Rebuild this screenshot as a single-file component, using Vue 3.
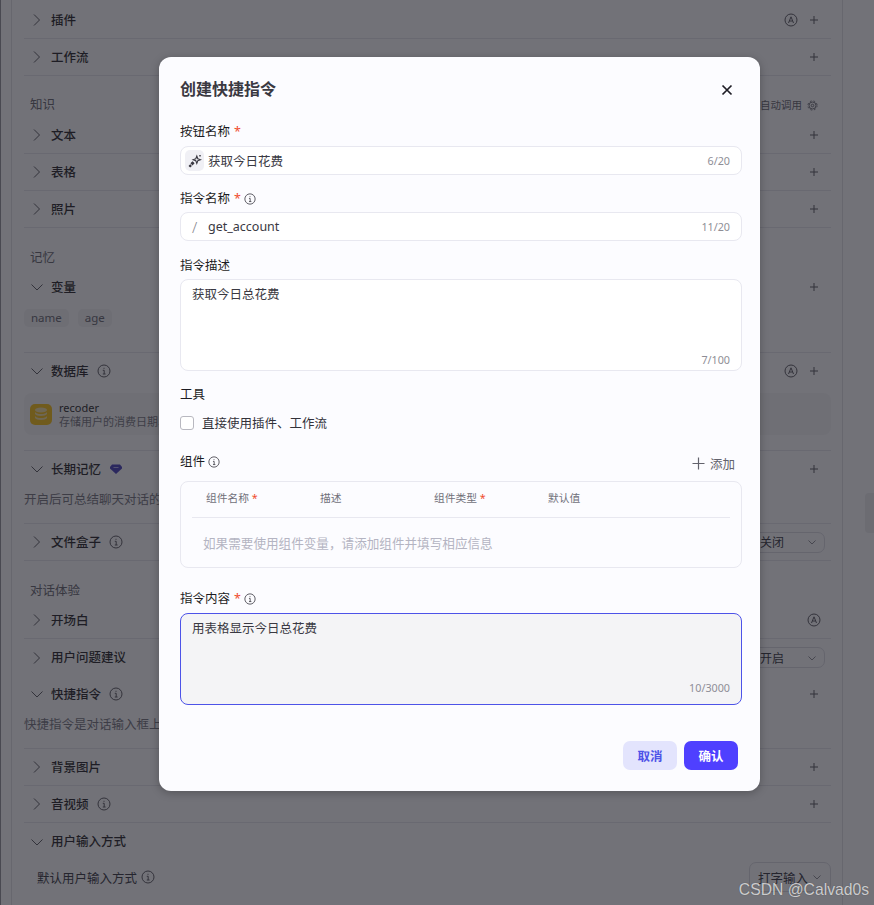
<template>
  <div class="page">
    <div class="shell">
      <div class="inner">
        <div class="panel">
          <template v-for="(block, i) in blocks" :key="i">
            <div v-if="block.type === 'heading'" class="group-title" :class="{ tall: block.tall }">
              <span>{{ block.text }}</span>
              <span v-if="block.auto" class="auto">自动调用
                <svg width="11" height="11" viewBox="0 0 12 12" fill="none" stroke="currentColor" stroke-width="1">
                  <circle cx="6" cy="6" r="3.800" />
                  <circle cx="6" cy="6" r="5" stroke-dasharray="2 2" />
                  <circle cx="6" cy="6" r="1.400" />
                </svg>
              </span>
            </div>
            <div v-else class="section" :class="{ lined: block.line !== false }">
              <div class="row">
                <svg class="chev" width="14" height="14" viewBox="0 0 14 14" fill="none" stroke="currentColor" stroke-width="1">
                  <path v-if="block.open" d="M1.500 4.500L7 10l5.500-5.500" />
                  <path v-else d="M4 1.500L9.500 7 4 12.500" />
                </svg>
                <span class="row-name">{{ block.text }}</span>
                <svg v-if="block.info" class="info" width="14" height="14" viewBox="0 0 14 14" fill="none" stroke="currentColor">
                  <circle cx="7" cy="7" r="6" />
                  <path d="M5.800 6.300H7.200V10M5.800 10h2.800M7 3.800v1" />
                </svg>
                <svg v-if="block.gem" class="gem" width="12" height="12" viewBox="0 0 12 12"><path d="M2 1.500h8l2 2.500v1.500L6 11 0 5.500V4z" fill="#3f37b8" /><path d="M3.500 4.500h5" stroke="#a9a5e6" /></svg>
                <span class="spacer"></span>
                <svg v-if="block.auto" class="badge" :class="{ last: !block.plus }" width="14" height="14" viewBox="0 0 14 14" fill="none" stroke="currentColor">
                  <circle cx="7" cy="7" r="6" />
                  <path d="M4.500 10L7 3.800 9.500 10M5.400 8h3.200" />
                </svg>
                <svg v-if="block.plus" class="plus" width="10" height="10" viewBox="0 0 10 10" stroke="currentColor"><path d="M5 1v8M1 5h8" /></svg>
                <div v-if="block.select" class="select">
                  <span>{{ block.select }}</span>
                  <svg width="10" height="10" viewBox="0 0 10 10" fill="none" stroke="currentColor"><path d="M1.500 3.500L5 7l3.500-3.500" /></svg>
                </div>
              </div>
              <div v-if="block.tags" class="tags">
                <span v-for="tag in block.tags" :key="tag" class="tag">{{ tag }}</span>
              </div>
              <div v-if="block.card" class="db-card">
                <div class="db-icon">
                  <svg width="14" height="14" viewBox="0 0 14 14" fill="#f0dca0">
                    <ellipse cx="7" cy="3" rx="6" ry="2.400" />
                    <path d="M1 5c1 1.400 3 2 6 2s5-.6 6-2v2c-.8 1.300-3 2-6 2S1.800 8.300 1 7zM1 9c1 1.400 3 2 6 2s5-.6 6-2v2c-.8 1.300-3 2-6 2s-5.200-.7-6-2z" />
                  </svg>
                </div>
                <div class="db-text">
                  <div class="db-name">recoder</div>
                  <div class="db-desc">存储用户的消费日期、消费金额等信息</div>
                </div>
              </div>
              <div v-if="block.desc" class="desc">{{ block.desc }}</div>
              <div v-if="block.sub" class="sub-row">
                <span>默认用户输入方式</span>
                <svg class="info" width="14" height="14" viewBox="0 0 14 14" fill="none" stroke="currentColor">
                  <circle cx="7" cy="7" r="6" />
                  <path d="M5.800 6.300H7.200V10M5.800 10h2.800M7 3.800v1" />
                </svg>
                <span class="spacer"></span>
                <div class="select wide">
                  <span>打字输入</span>
                  <svg width="10" height="10" viewBox="0 0 10 10" fill="none" stroke="currentColor"><path d="M1.500 3.500L5 7l3.500-3.500" /></svg>
                </div>
              </div>
            </div>
          </template>
        </div>
      </div>
    </div>
    <div class="scroll-thumb"></div>

    <div class="mask"></div>

    <div class="modal">
      <div class="modal-head">
        <h2>创建快捷指令</h2>
        <svg width="12" height="12" viewBox="0 0 12 12" stroke="#1f1e26" stroke-width="1.700"><path d="M1.500 1.500l9 9M10.500 1.500l-9 9" /></svg>
      </div>

      <div class="label">按钮名称 <i>*</i></div>
      <div class="input">
        <span class="wand">
          <svg width="14" height="14" viewBox="0 0 14 14" fill="none" stroke="#3a3942" stroke-width="1.100">
            <path d="M8.800 2l1 2.700 2.700 1-2.700 1-1 2.700-1-2.700-2.700-1 2.700-1z" />
            <path d="M4.500 8l1.300 1.300-1.300 1.300-1.300-1.300zM2.200 11l.9.900-.9.900-.9-.9z" fill="#3a3942" />
            <path d="M12 1v1.600M11.200 1.800h1.600" />
          </svg>
        </span>
        <span class="value name-value">获取今日花费</span>
        <span class="count">6/20</span>
      </div>

      <div class="label gap">指令名称 <i>*</i>
        <svg class="tip" width="12" height="12" viewBox="0 0 14 14" fill="none" stroke="currentColor" stroke-width="1.100"><circle cx="7" cy="7" r="6" /><path d="M5.800 6.300H7.200V10M5.800 10h2.800M7 3.800v1" /></svg>
      </div>
      <div class="input">
        <span class="slash">/</span>
        <span class="value">get_account</span>
        <span class="count">11/20</span>
      </div>

      <div class="label gap wide-gap">指令描述</div>
      <div class="textarea">
        <span class="value">获取今日总花费</span>
        <span class="count corner">7/100</span>
      </div>

      <div class="label tools">工具</div>
      <label class="check">
        <span class="box"></span>
        <span>直接使用插件、工作流</span>
      </label>

      <div class="comp-head">
        <div class="label">组件
          <svg class="tip" width="12" height="12" viewBox="0 0 14 14" fill="none" stroke="currentColor" stroke-width="1.100"><circle cx="7" cy="7" r="6" /><path d="M5.800 6.300H7.200V10M5.800 10h2.800M7 3.800v1" /></svg>
        </div>
        <div class="add">
          <svg width="13" height="13" viewBox="0 0 13 13" stroke="currentColor" stroke-width="1.200"><path d="M6.500 .5v12M.5 6.500h12" /></svg>
          添加
        </div>
      </div>
      <div class="comp-box">
        <div class="comp-cols">
          <span>组件名称 <i>*</i></span>
          <span>描述</span>
          <span>组件类型 <i>*</i></span>
          <span>默认值</span>
        </div>
        <div class="comp-empty">如果需要使用组件变量，请添加组件并填写相应信息</div>
      </div>

      <div class="label content-label">指令内容 <i>*</i>
        <svg class="tip" width="12" height="12" viewBox="0 0 14 14" fill="none" stroke="currentColor" stroke-width="1.100"><circle cx="7" cy="7" r="6" /><path d="M5.800 6.300H7.200V10M5.800 10h2.800M7 3.800v1" /></svg>
      </div>
      <div class="textarea focused">
        <span class="value">用表格显示今日总花费</span>
        <span class="count corner">10/3000</span>
      </div>

      <div class="actions">
        <button class="btn ghost">取消</button>
        <button class="btn primary">确认</button>
      </div>
    </div>

    <div class="watermark">CSDN @Calvad0s</div>
  </div>
</template>

<script setup>
const blocks = [
  { text: '插件', plus: true, auto: true },
  { text: '工作流', plus: true },
  { type: 'heading', text: '知识', auto: true },
  { text: '文本', plus: true },
  { text: '表格', plus: true },
  { text: '照片', plus: true },
  { type: 'heading', text: '记忆', tall: true },
  { text: '变量', open: true, plus: true, tags: ['name', 'age'] },
  { text: '数据库', open: true, info: true, plus: true, auto: true, card: true },
  { text: '长期记忆', open: true, gem: true, plus: true, desc: '开启后可总结聊天对话的内容，并用于更好地响应用户的消息。' },
  { text: '文件盒子', info: true, select: '关闭' },
  { type: 'heading', text: '对话体验', tall: true },
  { text: '开场白', auto: true },
  { text: '用户问题建议', select: '开启', line: false },
  { text: '快捷指令', open: true, info: true, plus: true, desc: '快捷指令是对话输入框上方的按钮，配置完成后，用户可以快速发起预设对话' },
  { text: '背景图片', plus: true },
  { text: '音视频', info: true, plus: true },
  { text: '用户输入方式', open: true, line: false, sub: true }
]
</script>

<style>
html,
body {
  margin: 0;
  background: #717075;
}
</style>

<style scoped>
.page {
  position: relative;
  width: 874px;
  height: 905px;
  overflow: hidden;
  background: #f9f9fc;
  font-family: "Noto Sans", "Noto Sans CJK SC", sans-serif;
  font-size: 12.5px;
  color: #1d1c23;
}

.shell {
  box-sizing: border-box;
  height: 905px;
  padding-left: 10px;
  border-left: 1px solid #8f8f96;
}

.inner {
  box-sizing: border-box;
  width: 832px;
  height: 905px;
  padding: 2px 11px 0 12px;
  border-left: 1px solid #dcdce3;
  border-right: 1px solid #dcdce3;
}

.section.lined {
  border-bottom: 1px solid #e3e3ea;
}

.row {
  display: flex;
  align-items: center;
  height: 36px;
  padding-right: 12px;
}

.section:not(.lined) .row {
  height: 37px;
}

.chev {
  flex: none;
  margin-left: 6px;
  margin-right: 7px;
  color: #55545c;
}

.row-name {
  margin-top: -2px;
  font-weight: 500;
}

.info {
  margin-left: 8px;
  color: #55545c;
}

.gem {
  margin-left: 9px;
}

.spacer {
  flex: 1;
}

.badge {
  color: #55545c;
  margin-right: 11px;
}

.badge.last {
  margin-right: -2px;
}

.plus {
  color: #55545c;
}

.group-title {
  display: flex;
  justify-content: space-between;
  align-items: flex-end;
  height: 38px;
  box-sizing: border-box;
  padding: 0 13px 0 6px;
  margin-bottom: 3px;
  line-height: 18px;
  color: #60606a;
}

.group-title.tall {
  height: 39px;
  margin-bottom: 2px;
}

.auto {
  display: flex;
  align-items: center;
  gap: 5px;
  font-size: 10.500px;
}

.tags {
  display: flex;
  gap: 9px;
  margin-top: 4px;
  padding-bottom: 25px;
}

.tag {
  height: 18px;
  padding: 0 7px;
  line-height: 17px;
  border-radius: 5px;
  background: #eeeef2;
  color: #60606a;
  font-size: 11.500px;
}

.db-card {
  display: flex;
  align-items: center;
  gap: 7px;
  height: 42px;
  margin: 4px 0 15px;
  padding-left: 6px;
  border-radius: 8px;
  background: #f1f1f4;
  overflow: hidden;
}

.db-icon {
  display: flex;
  align-items: center;
  justify-content: center;
  width: 22px;
  height: 21px;
  border-radius: 5px;
  background: #f5bd0f;
}

.db-text {
  padding-top: 2px;
}

.db-name {
  font-size: 11px;
  line-height: 14px;
}

.db-desc {
  font-size: 11px;
  line-height: 14px;
  color: #70707a;
  white-space: nowrap;
}

.desc {
  padding: 4px 0 14px;
  line-height: 18px;
  color: #70707a;
  white-space: nowrap;
}

.select {
  display: flex;
  align-items: center;
  justify-content: space-between;
  box-sizing: border-box;
  width: 75px;
  height: 21px;
  padding: 0 7px 0 9px;
  margin-right: -6px;
  border: 1px solid #d8d8e0;
  border-radius: 7px;
  font-size: 12px;
  color: #30303a;
}

.select svg {
  color: #8a8a92;
}

.select.wide {
  width: 82px;
  height: 30px;
  padding: 0 8px;
  margin-right: -12px;
  font-size: 12.500px;
}

.sub-row {
  display: flex;
  align-items: center;
  height: 30px;
  padding-left: 13px;
  margin-top: 2px;
  padding-right: 12px;
  color: #30303a;
}

.sub-row .info {
  margin-left: 4px;
}

.scroll-thumb {
  position: absolute;
  right: 0;
  top: 493px;
  width: 9px;
  height: 40px;
  border-radius: 4px 0 0 4px;
  background: #e9e9ed;
}

.mask {
  position: absolute;
  inset: 0;
  background: rgba(30, 30, 38, 0.62);
}

.modal {
  position: absolute;
  left: 159px;
  top: 57px;
  box-sizing: border-box;
  width: 601px;
  height: 734px;
  padding: 0 18px 0 21px;
  border-radius: 12px;
  background: #fcfcff;
  box-shadow: 0 2px 8px rgba(0, 0, 0, 0.25);
  color: #1d1c23;
}

.modal-head {
  display: flex;
  align-items: center;
  justify-content: space-between;
  height: 65px;
  padding-right: 9px;
}

.modal-head h2 {
  margin: -3px 0 0;
  font-size: 16px;
  font-weight: 600;
  color: #3a3942;
}

.label {
  display: flex;
  align-items: center;
  gap: 4px;
  height: 19px;
  line-height: 19px;
  font-size: 12.500px;
  font-weight: 400;
  color: #1d1c23;
}

.label i,
.comp-cols i {
  font-style: normal;
  color: #f04c2e;
}

.tip {
  color: #55545c;
  margin-left: -1px;
}

.gap {
  margin-top: 14px;
  margin-bottom: -1px;
}

.wide-gap {
  margin-top: 15px;
}

.input {
  display: flex;
  align-items: center;
  box-sizing: border-box;
  height: 29px;
  margin-top: 5px;
  padding-left: 4px;
  padding-right: 11px;
  border: 1px solid #e8e8f0;
  border-radius: 8px;
  background: #fff;
}

.wand {
  display: flex;
  align-items: center;
  justify-content: center;
  width: 19px;
  height: 21px;
  border-radius: 5px;
  background: #f0f0f5;
}

.value {
  color: #3a3942;
}

.name-value {
  margin-left: 4px;
}

.slash {
  margin-left: 7px;
  width: 16px;
  color: #85858d;
  font-size: 15px;
  font-weight: 300;
}

.count {
  margin-left: auto;
  font-size: 10.750px;
  color: #8e8e96;
}

.textarea {
  position: relative;
  box-sizing: border-box;
  height: 92px;
  margin-top: 5px;
  padding: 4px 11px;
  border: 1px solid #e8e8f0;
  border-radius: 8px;
  background: #fff;
}

.count.corner {
  position: absolute;
  right: 11px;
  bottom: 3px;
}

.textarea.focused {
  border-color: #4d53e8;
  background: #f4f4f6;
}

.textarea.focused .count.corner {
  bottom: 9px;
}

.tools {
  margin-top: 14px;
}

.check {
  display: flex;
  align-items: center;
  gap: 8px;
  height: 19px;
  margin-top: 9px;
  color: #33323a;
}

.box {
  box-sizing: border-box;
  width: 14px;
  height: 14px;
  border: 1px solid #b8b8c0;
  border-radius: 3px;
  background: #fff;
}

.comp-head {
  display: flex;
  align-items: center;
  justify-content: space-between;
  height: 19px;
  margin-top: 20px;
  padding-right: 7px;
}

.add {
  display: flex;
  align-items: center;
  gap: 5px;
  margin-top: 4px;
  color: #62626c;
}

.comp-box {
  box-sizing: border-box;
  height: 87px;
  margin-top: 10px;
  padding: 0 11px;
  border: 1px solid #e8e8f0;
  border-radius: 8px;
}

.comp-cols {
  display: grid;
  grid-template-columns: 114px 114px 114px 1fr;
  align-items: center;
  box-sizing: border-box;
  height: 36px;
  padding: 0 0 4px 14px;
  border-bottom: 1px solid #e8e8f0;
  font-size: 10.750px;
  color: #70707a;
}

.comp-empty {
  margin-top: 17px;
  padding-left: 11px;
  line-height: 18px;
  font-size: 12.600px;
  color: #b4b4c2;
}

.content-label {
  margin-top: 21px;
}

.actions {
  display: flex;
  justify-content: flex-end;
  gap: 7px;
  margin-top: 36px;
  padding-right: 4px;
}

.btn {
  width: 54px;
  height: 29px;
  border: 0;
  border-radius: 7px;
  font-family: inherit;
  font-size: 12.500px;
  font-weight: 600;
}

.ghost {
  background: #e3e4fd;
  color: #4d53e8;
}

.primary {
  background: #4f40ff;
  color: #fff;
}

.watermark {
  position: absolute;
  right: 5px;
  bottom: 6px;
  font-family: "Liberation Sans", sans-serif;
  font-size: 15.700px;
  color: rgba(255, 255, 255, 0.72);
  text-shadow: 0 0 1px rgba(0, 0, 0, 0.4);
}
</style>
